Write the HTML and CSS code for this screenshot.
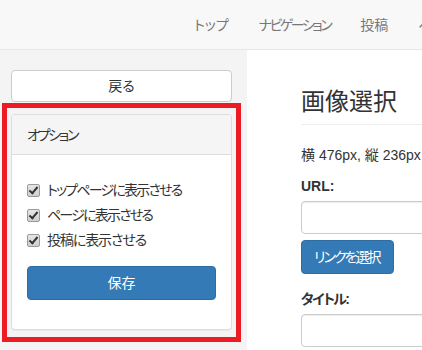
FILE: index.html
```html
<!DOCTYPE html>
<html lang="ja">
<head>
<meta charset="utf-8">
<title>画像選択</title>
<link rel="stylesheet" href="styles.css">
</head>
<body>
<nav class="navbar">
  <ul class="nav">
    <li><a href="#">トップ</a></li>
    <li><a class="tight" href="#">ナビゲーション</a></li>
    <li><a href="#">投稿</a></li>
    <li><a href="#">ページ</a></li>
  </ul>
</nav>
<div class="main">
  <aside class="sidebar">
    <a class="btn-back" href="#">戻る</a>
    <div class="panel">
      <div class="panel-heading">オプション</div>
      <div class="panel-body">
        <label class="check-row"><input type="checkbox" class="cb" checked><span class="check-text">トップページに表示させる</span></label>
        <label class="check-row"><input type="checkbox" class="cb" checked><span class="check-text">ページに表示させる</span></label>
        <label class="check-row"><input type="checkbox" class="cb" checked><span class="check-text short">投稿に表示させる</span></label>
        <button class="btn-primary btn-save" type="button">保存</button>
      </div>
    </div>
    <div class="highlight"></div>
  </aside>
  <section class="content">
    <h1 class="page-header">画像選択</h1>
    <p class="size">横 476px, 縦 236px</p>
    <label class="field-label">URL:</label>
    <input class="form-control" type="text">
    <button class="btn-primary btn-link" type="button">リンクを選択</button>
    <label class="field-label title-label">タイトル:</label>
    <input class="form-control" type="text">
  </section>
</div>
</body>
</html>
```
FILE: styles.css
```css
html, body {
  margin: 0;
  padding: 0;
  overflow: hidden;
  width: 422px;
  height: 350px;
}
body {
  font-family: "Liberation Sans", "Noto Sans CJK JP", sans-serif;
  font-size: 14px;
  line-height: 20px;
  color: #333;
  font-feature-settings: "palt";
  background: #fff;
}
.navbar {
  height: 49px;
  background: #f8f8f8;
  border-bottom: 1px solid #e7e7e7;
}
.nav {
  list-style: none;
  margin: 0;
  padding: 0 0 0 179px;
  display: flex;
  white-space: nowrap;
}
.nav a {
  display: block;
  padding: 15px;
  line-height: 20px;
  color: #777;
  text-decoration: none;
}
.nav a.tight {
  letter-spacing: -2.5px;
}
.main {
  display: flex;
  height: 300px;
}
.sidebar {
  position: relative;
  flex: 0 0 247px;
  box-sizing: border-box;
  background: #f4f4f4;
  padding: 20px 15px 0 11px;
}
.btn-back {
  display: block;
  box-sizing: border-box;
  height: 32px;
  line-height: 30px;
  text-align: center;
  background: #fff;
  border: 1px solid #ccc;
  border-radius: 4px;
  color: #333;
  text-decoration: none;
}
.panel {
  margin-top: 12px;
  background: #fff;
  border: 1px solid #ddd;
  border-radius: 4px;
  box-shadow: 0 1px 1px rgba(0,0,0,.05);
}
.panel-heading {
  padding: 10px 15px 9px;
  background: #f5f5f5;
  border-bottom: 1px solid #ddd;
  border-radius: 3px 3px 0 0;
  letter-spacing: -2.3px;
}
.panel-body {
  padding: 25px 15px 29px;
  display: flex;
  flex-direction: column;
}
.check-row {
  display: flex;
  align-items: center;
  height: 20px;
}
.check-row + .check-row {
  margin-top: 5px;
}
.check-text {
  letter-spacing: -1.8px;
}
.check-text.short {
  letter-spacing: -1.1px;
}
.cb {
  appearance: none;
  -webkit-appearance: none;
  position: relative;
  box-sizing: border-box;
  width: 13px;
  height: 13px;
  margin: 1px 7px 0 0;
  border: 1px solid #9a9a9a;
  border-radius: 2px;
  background: linear-gradient(#e6e6e6, #cfcfcf);
}
.cb:checked::after {
  content: "";
  position: absolute;
  left: 3px;
  top: 0px;
  width: 3px;
  height: 7px;
  border: solid #333;
  border-width: 0 2px 2px 0;
  transform: rotate(40deg);
}
.btn-primary {
  display: block;
  box-sizing: border-box;
  height: 34px;
  padding: 0 12px;
  font: inherit;
  font-feature-settings: "palt";
  color: #fff;
  background: #337ab7;
  border: 1px solid #2e6da4;
  border-radius: 4px;
}
.btn-save {
  margin-top: 16px;
  width: 100%;
}
.highlight {
  position: absolute;
  left: 2px;
  top: 53px;
  width: 239px;
  height: 239px;
  box-sizing: border-box;
  border: 5px solid #ed1c24;
}
.content {
  flex: 1;
  padding: 37px 0 0 54px;
  min-width: 0;
}
.page-header {
  margin: 0;
  padding-bottom: 7px;
  font-size: 24px;
  line-height: 30px;
  font-weight: normal;
  border-bottom: 1px solid #eee;
  width: 400px;
}
.size {
  margin: 20px 0 0;
}
.field-label {
  display: block;
  margin-top: 11px;
  font-weight: bold;
}
.title-label {
  margin-top: 15px;
  letter-spacing: -1.6px;
}
.form-control {
  display: block;
  box-sizing: border-box;
  width: 300px;
  height: 33px;
  margin: 5px 0 0;
  border: 1px solid #ccc;
  border-radius: 4px;
  box-shadow: inset 0 1px 1px rgba(0,0,0,.075);
  background: #fff;
}
.btn-link {
  margin-top: 6px;
  letter-spacing: -2px;
  padding: 0 14px 0 12px;
}
```
